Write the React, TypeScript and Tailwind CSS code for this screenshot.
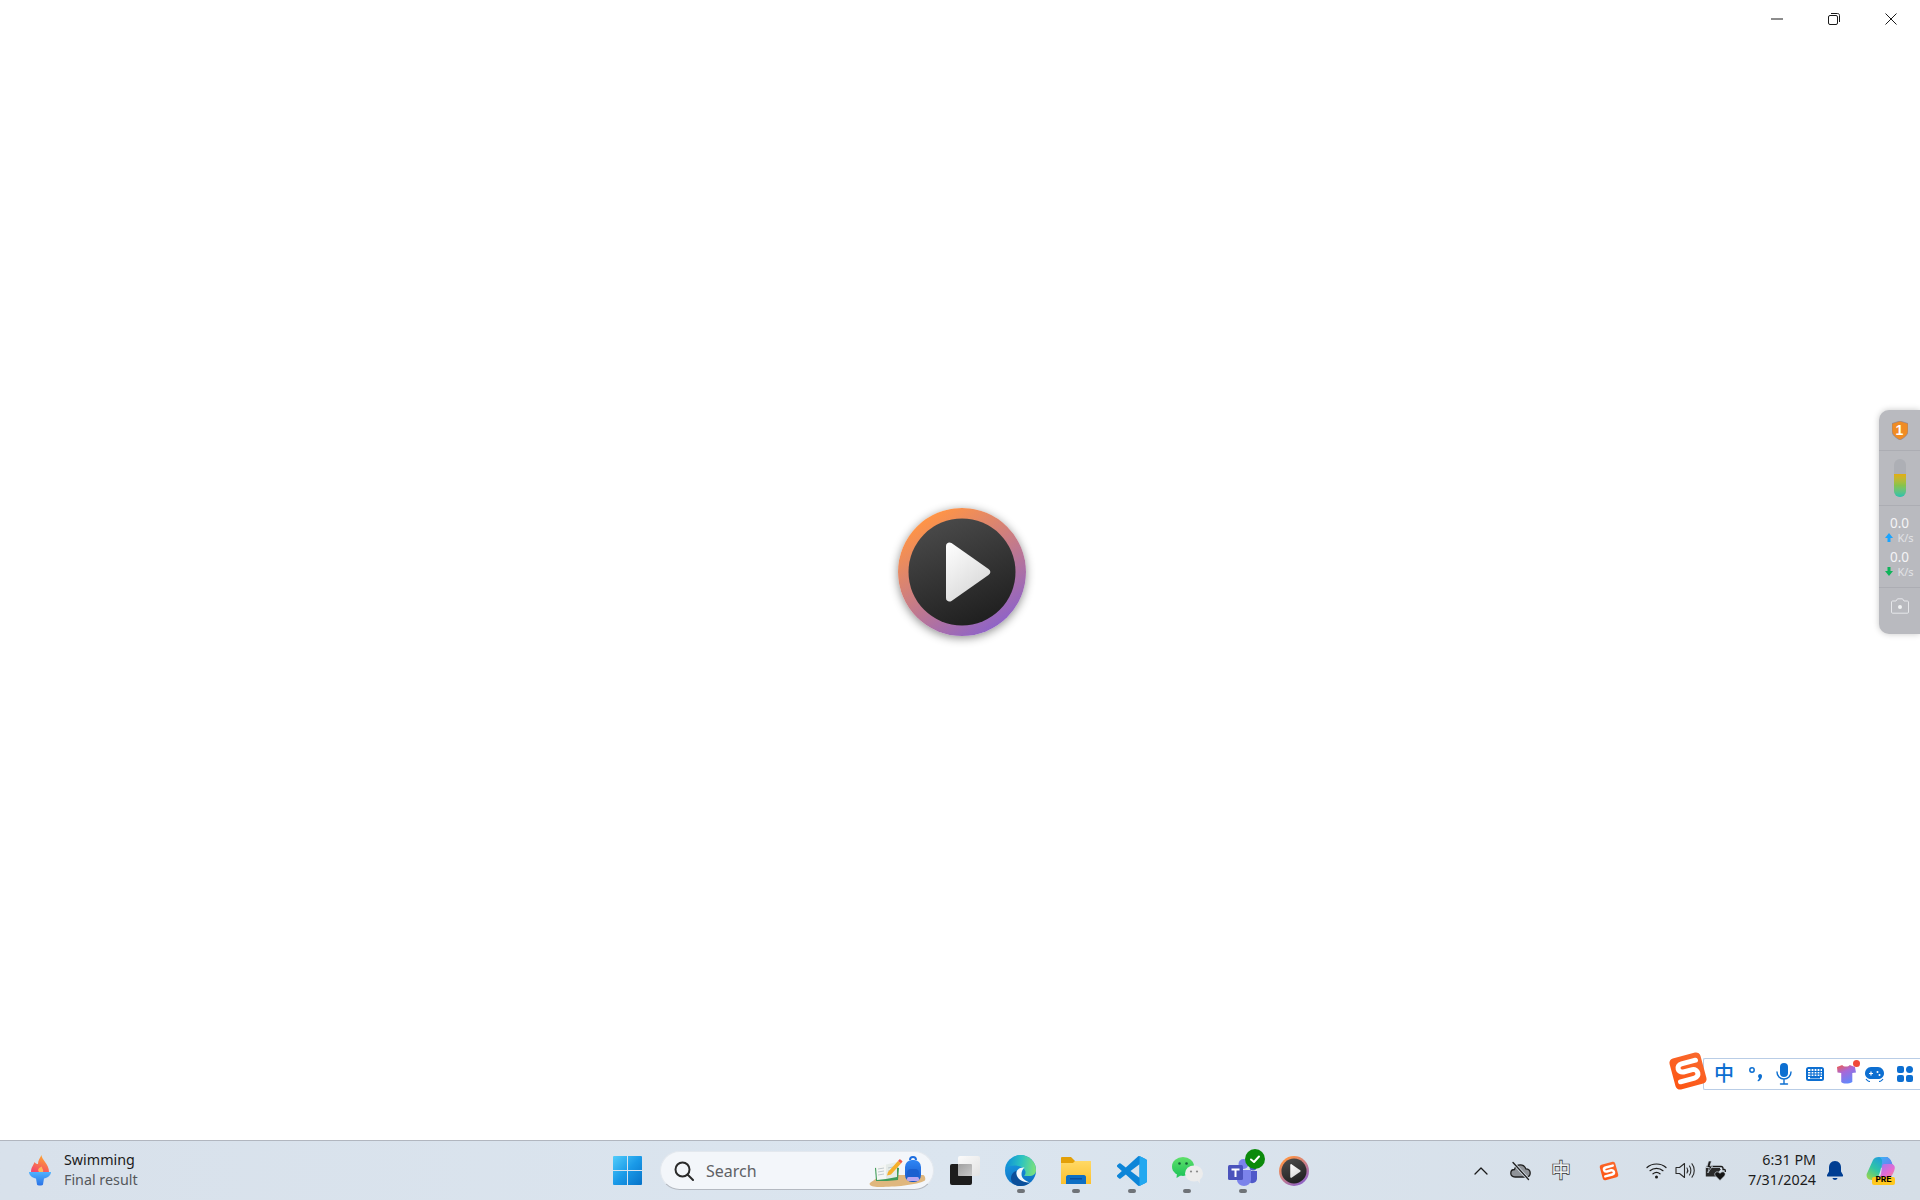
import React from "react";

const FONT = "font-['Noto_Sans','Noto_Sans_CJK_SC',sans-serif]";

function Torch() {
  return (
    <svg width="22" height="31" viewBox="0 0 22 31">
      <defs>
        <linearGradient id="flame" x1="0.7" y1="0" x2="0.3" y2="1">
          <stop offset="0" stopColor="#ffa92e" />
          <stop offset="1" stopColor="#f4476b" />
        </linearGradient>
        <linearGradient id="bowl" x1="0" y1="0" x2="0" y2="1">
          <stop offset="0" stopColor="#4fb2ff" />
          <stop offset="1" stopColor="#2a72e6" />
        </linearGradient>
      </defs>
      <path d="M12.5 0C12.5 5 20 8.500 20 17H2C2 12 4.500 10.500 5.500 7C6.500 8.500 7.500 9 9 9C9 5.500 11 3 12.500 0Z" fill="url(#flame)" />
      <path d="M10 17C8 14.500 10 12.500 13 11.500C12.500 13.500 15 14.500 14 17Z" fill="#ffb65a" />
      <path d="M0 17H22C22 20.500 18 23 15 23.500L14 29.500C13.800 30.800 8.200 30.800 8 29.500L7 23.500C4 23 0 20.500 0 17Z" fill="url(#bowl)" />
    </svg>
  );
}

function StartIcon() {
  return (
    <svg width="29" height="29" viewBox="0 0 29 29">
      <defs>
        <linearGradient id="win" x1="0" y1="0" x2="1" y2="1">
          <stop offset="0" stopColor="#52cdfb" />
          <stop offset="0.5" stopColor="#1a9ae8" />
          <stop offset="1" stopColor="#0672c8" />
        </linearGradient>
      </defs>
      <path d="M1 0H14V14H0V1A1 1 0 0 1 1 0ZM15 0H28A1 1 0 0 1 29 1V14H15ZM0 15H14V29H1A1 1 0 0 1 0 28ZM15 15H29V28A1 1 0 0 1 28 29H15Z" fill="url(#win)" />
    </svg>
  );
}

function SearchArt() {
  return (
    <svg width="58" height="32" viewBox="0 0 58 32">
      <defs>
        <linearGradient id="pack" x1="0" y1="0" x2="0" y2="1">
          <stop offset="0" stopColor="#2f86f5" />
          <stop offset="1" stopColor="#1656c8" />
        </linearGradient>
      </defs>
      <path d="M10 19H54C56 19 57.500 24 55 25C44 30 20 31 10 31C4 31 -1 29 1 27C3 25 8 23 10 19Z" fill="#dfb77e" />
      <path d="M6 12L18 9L30 12L29 24L18 25L7 25Z" fill="#3f9b58" />
      <path d="M7 11L17 8.500V23L8 24Z" fill="#f4f6f4" />
      <path d="M17 8.500L28 6V21L17 23Z" fill="#e5ebe8" />
      <path d="M9 13L15 12M9 16L15 15M9 19L15 18M19 12L24 11M19 15L24 14" stroke="#b5bfc4" strokeWidth="0.8" />
      <path d="M19 16L29 5L32 7.500L22 18.500L18 19.500Z" fill="#f6b02c" />
      <path d="M29 5L30.500 3.200C31 2.800 33.500 4.800 33.500 5.500L32 7.500Z" fill="#ee5a4a" />
      <rect x="36" y="4" width="16" height="22" rx="7" fill="url(#pack)" />
      <path d="M41 4C41 0 47 0 47 4" fill="none" stroke="#1d6ee0" strokeWidth="2" />
      <rect x="38" y="13" width="12" height="12" rx="4" fill="#1b60d0" />
      <rect x="38" y="21" width="12" height="4" rx="1.500" fill="#b9a7f0" />
    </svg>
  );
}

function TaskView() {
  return (
    <svg width="30" height="29" viewBox="0 0 30 29">
      <defs>
        <linearGradient id="tv" x1="0" y1="0" x2="1" y2="1">
          <stop offset="0" stopColor="#fbfbfb" />
          <stop offset="1" stopColor="#e2e2e2" />
        </linearGradient>
        <linearGradient id="tv2" x1="0" y1="0" x2="1" y2="1">
          <stop offset="0" stopColor="#a0a0a0" />
          <stop offset="1" stopColor="#c8c8c8" />
        </linearGradient>
      </defs>
      <rect x="0" y="8" width="22" height="21" rx="2" fill="#1d1d1d" />
      <rect x="8" y="0" width="22" height="20" rx="2" fill="url(#tv)" />
      <rect x="8" y="8" width="14" height="12" rx="1" fill="url(#tv2)" />
    </svg>
  );
}

function Edge() {
  return (
    <svg width="31" height="31" viewBox="0 0 31 31">
      <defs>
        <linearGradient id="edgeB" x1="0.2" y1="0.1" x2="0.4" y2="1">
          <stop offset="0" stopColor="#1b9de2" />
          <stop offset="1" stopColor="#0d6fc4" />
        </linearGradient>
        <linearGradient id="edgeG" x1="0" y1="0.4" x2="1" y2="0.5">
          <stop offset="0" stopColor="#0f8fd8" />
          <stop offset="0.5" stopColor="#2cc3c0" />
          <stop offset="1" stopColor="#7ce27a" />
        </linearGradient>
      </defs>
      <circle cx="15.500" cy="15.500" r="15.500" fill="url(#edgeB)" />
      <path d="M15.500 0A15.500 15.500 0 0 1 31 15.500C31 19 28 21 24 21H19C21 19 21 16 19 14C16 10.500 8 9 .6 13C3 5 9 0 15.500 0Z" fill="url(#edgeG)" />
      <path d="M11.500 19C12 24 18 28 25 27.500C22 30 18.500 31 15.500 31C10 31 6 28 6 23.500C6 19.500 8.500 16.500 11.500 16Z" fill="#0b4f9a" />
      <path d="M19.500 12.500C14.500 12 11 15 11.500 19C12 24 18 28 25 27.500C21 26 16.500 24 16.500 19C16.500 16.500 17.500 14 19.500 12.500Z" fill="#f2f7fb" />
    </svg>
  );
}

function Folder() {
  return (
    <svg width="30" height="27" viewBox="0 0 30 27">
      <defs>
        <linearGradient id="fold" x1="0" y1="0" x2="0" y2="1">
          <stop offset="0" stopColor="#ffd966" />
          <stop offset="1" stopColor="#fcc02c" />
        </linearGradient>
      </defs>
      <path d="M0 1A1 1 0 0 1 1 0H10L14 4H30V12H0Z" fill="#e3a008" />
      <path d="M0 6H12L14 4H30V27H0Z" fill="url(#fold)" />
      <path d="M5 27V20C5 19 6 18 7 18H23C24 18 25 19 25 20V27Z" fill="#0d6fc4" />
      <rect x="9" y="21" width="12" height="1.500" fill="#0a4f9e" />
    </svg>
  );
}

function VSCode() {
  return (
    <svg width="30" height="30" viewBox="0 0 24 24">
      <path d="M23.150 2.587L18.210.21a1.494 1.494 0 0 0-1.705.29l-9.460 8.630-4.120-3.128a.999.999 0 0 0-1.276.057L.327 7.261A1 1 0 0 0 .326 8.740L3.899 12 .326 15.260a1 1 0 0 0 .001 1.479L1.650 17.940a.999.999 0 0 0 1.276.057l4.120-3.128 9.460 8.630a1.492 1.492 0 0 0 1.704.29l4.942-2.377A1.500 1.500 0 0 0 24 20.060V3.939a1.500 1.500 0 0 0-.85-1.352zm-5.146 14.861L10.826 12l7.178-5.448v10.896z" fill="#0d85d8" />
      <path d="M18 .05C18 .05 23.150 2.587 23.150 2.587A1.500 1.500 0 0 1 24 3.939V20.060a1.500 1.500 0 0 1-.85 1.352L18 23.900Z" fill="#22a8f0" />
    </svg>
  );
}

function WeChat() {
  return (
    <svg width="31" height="27" viewBox="0 0 31 27">
      <defs>
        <linearGradient id="wc" x1="0" y1="0" x2="0" y2="1">
          <stop offset="0" stopColor="#5fe06a" />
          <stop offset="1" stopColor="#1fc45a" />
        </linearGradient>
      </defs>
      <ellipse cx="11" cy="9.500" rx="11" ry="9.500" fill="url(#wc)" />
      <path d="M5 16L4.500 21L9.500 18Z" fill="#2cc85c" />
      <circle cx="7.500" cy="6.500" r="1.300" fill="#16633a" />
      <circle cx="14.500" cy="6.500" r="1.300" fill="#16633a" />
      <ellipse cx="22" cy="16.500" rx="9" ry="8" fill="#ececec" />
      <path d="M25 23L28 26.500L27.500 21.500Z" fill="#ececec" />
      <circle cx="19" cy="14.500" r="1.100" fill="#8b8b8b" />
      <circle cx="25" cy="14.500" r="1.100" fill="#8b8b8b" />
    </svg>
  );
}

function Teams() {
  return (
    <span className="relative ml-[1px] flex h-[30px] w-[30px] items-center justify-center">
      <svg width="30" height="27" viewBox="0 0 30 27" className="mt-[4px]">
        <circle cx="15.500" cy="5" r="5" fill="#7b83eb" />
        <circle cx="25" cy="8" r="3.500" fill="#5059c9" />
        <path d="M20 12H29V20A5 5 0 0 1 20 22Z" fill="#5059c9" />
        <path d="M9 11H23V21A7 6 0 0 1 9 21Z" fill="#7b83eb" />
        <rect x="0" y="6" width="15" height="15" rx="1.500" fill="#4b53bc" />
        <path d="M3.500 9.500H11.500V11.500H8.500V18H6.500V11.500H3.500Z" fill="#fff" />
      </svg>
      <span className="absolute left-[17px] top-[-7px] flex h-[20px] w-[20px] items-center justify-center rounded-full bg-[#0b8a0b]">
        <svg width="12" height="12" viewBox="0 0 12 12">
          <path d="M2 6.500L5 9L10 3.500" fill="none" stroke="#fff" strokeWidth="2" strokeLinecap="round" strokeLinejoin="round" />
        </svg>
      </span>
    </span>
  );
}

function PlayLogo({ big }: { big?: boolean }) {
  const id = big ? "ring-b" : "ring-s";
  return (
    <svg width={big ? 128 : 30} height={big ? 128 : 30} viewBox="0 0 128 128" className="block">
      <defs>
        <linearGradient id={id} x1="0.2" y1="0.1" x2="0.75" y2="0.95">
          <stop offset="0" stopColor="#ff9446" />
          <stop offset="1" stopColor="#8e63c8" />
        </linearGradient>
        <linearGradient id={id + "d"} x1="0.3" y1="0" x2="0.7" y2="1">
          <stop offset="0" stopColor="#4a4a4a" />
          <stop offset="1" stopColor="#1e1e1e" />
        </linearGradient>
        <linearGradient id={id + "w"} x1="0" y1="0" x2="0.6" y2="1">
          <stop offset="0" stopColor="#ffffff" />
          <stop offset="1" stopColor="#d8d8d8" />
        </linearGradient>
      </defs>
      <circle cx="64" cy="64" r="64" fill={`url(#${id})`} />
      <circle cx="64" cy="64" r="53.500" fill={`url(#${id}d)`} />
      <path d="M48 38C48 35 51 33.500 53.500 35L90.500 61C93 63 93 65 90.500 67L53.500 93C51 94.500 48 93 48 90Z" fill={`url(#${id}w)`} />
    </svg>
  );
}

function OneDrive() {
  return (
    <svg width="21" height="20" viewBox="0 0 21 20">
      <path d="M5 16C2 16 .8 14 .8 12.200C.8 10 2.500 8.500 4.500 8.500C5.200 5.500 7.500 3.800 10.300 3.800C13 3.800 15 5.500 15.800 7.800C18.500 7.800 20.200 9.800 20.200 12C20.200 14.300 18.500 16 16 16Z" fill="#8f9398" stroke="#1f1f1f" strokeWidth="1.300" />
      <path d="M3 1.500L18.500 18.500" stroke="#d6dfe8" strokeWidth="3" />
      <path d="M3 1.500L18.500 18.500" stroke="#1f1f1f" strokeWidth="1.300" strokeLinecap="round" />
    </svg>
  );
}

function SogouS({ size }: { size: number }) {
  return (
    <svg width={size} height={size} viewBox="0 0 40 40">
      <defs>
        <linearGradient id={"sg" + size} x1="0" y1="1" x2="1" y2="0">
          <stop offset="0" stopColor="#fd5412" />
          <stop offset="1" stopColor="#f96a2f" />
        </linearGradient>
      </defs>
      <g transform="rotate(-15 20 20)">
        <rect x="4" y="4" width="32" height="32" rx="4.500" fill={`url(#sg${size})`} />
        <path d="M30 11.500H15.500C9.500 11.500 9.500 19.500 15.500 19.800H24.500C30.500 20.200 30.500 28.500 24.500 28.500H10" fill="none" stroke="#fff" strokeWidth="5" strokeLinecap="round" />
      </g>
    </svg>
  );
}

function Wifi() {
  return (
    <svg width="21" height="17" viewBox="0 0 21 17" fill="none" stroke="#1b1b1b" strokeWidth="1.200" strokeLinecap="round">
      <path d="M1 5.500C6 .8 15 .8 20 5.500" />
      <path d="M4 8.700C7.500 5.500 13.500 5.500 17 8.700" />
      <path d="M7 11.800C9 10.200 12 10.200 14 11.800" />
      <circle cx="10.500" cy="15" r="1.500" fill="#1b1b1b" stroke="none" />
    </svg>
  );
}

function Volume() {
  return (
    <svg width="21" height="17" viewBox="0 0 21 17" fill="none" stroke="#2b2b2b" strokeWidth="1.100" strokeLinecap="round" strokeLinejoin="round">
      <path d="M1 5.500H4.500L9.500 1.500V15.500L4.500 11.500H1Z" />
      <path d="M12 6C13 7.500 13 9.500 12 11" />
      <path d="M14.500 4C16.300 6.500 16.300 10.500 14.500 13" />
      <path d="M17 1.800C20 5.500 20 11.500 17 15.200" />
    </svg>
  );
}

function Battery() {
  return (
    <svg width="21" height="20" viewBox="0 0 21 20">
      <path d="M1.500 5.500H16C17 5.500 18 6.500 18 7.500V8.500H19.500C20 8.500 20.300 9 20.300 9.500V11" fill="none" stroke="#1a1a1a" strokeWidth="1.300" />
      <path d="M.8 5.500V15.500H12V13L16 8H15L15 7H1Z" fill="#2a2a2a" />
      <path d="M3.500 0L1.800 6.500H4.300L2.800 12L7.500 5H5L6.500 0Z" fill="#1a1a1a" stroke="#d6dfe8" strokeWidth="0.700" />
      <path d="M15 19.500L10.500 15C9 13.300 10 10.800 12.200 10.800C13.300 10.800 14.400 11.400 15 12.300C15.600 11.400 16.700 10.800 17.800 10.800C20 10.800 21 13.300 19.500 15Z" fill="#151515" stroke="#d6dfe8" strokeWidth="0.700" />
    </svg>
  );
}

function Bell() {
  return (
    <svg width="16" height="20" viewBox="0 0 16 20">
      <path d="M8 0C4 0 2 3 2 6.500V10.500L0 14C-.3 15 .3 15.500 1 15.500H15C15.700 15.500 16.300 15 16 14L14 10.500V6.500C14 3 12 0 8 0Z" fill="#003e92" />
      <path d="M5.500 17H10.500C10 19.500 6 19.500 5.500 17Z" fill="#003e92" />
    </svg>
  );
}

function Copilot() {
  return (
    <span className="relative block h-[28px] w-[29px]">
      <svg width="29" height="24" viewBox="0 0 29 24" className="block">
        <defs>
          <linearGradient id="cp1" x1="0" y1="1" x2="0.8" y2="0">
            <stop offset="0" stopColor="#a9d83f" />
            <stop offset="0.45" stopColor="#2fc5a5" />
            <stop offset="1" stopColor="#1b8ff0" />
          </linearGradient>
          <linearGradient id="cp2" x1="0" y1="0" x2="1" y2="1">
            <stop offset="0" stopColor="#8f7df5" />
            <stop offset="0.6" stopColor="#e66ad2" />
            <stop offset="1" stopColor="#f59a72" />
          </linearGradient>
          <linearGradient id="cp3" x1="0" y1="0" x2="1" y2="1">
            <stop offset="0" stopColor="#38b6f5" />
            <stop offset="1" stopColor="#7a70f0" />
          </linearGradient>
        </defs>
        <path d="M7 3C8 1 10 0 13 0H20C22 0 24 2 25 4L27 9H18L15 11C14 15 13 19 11 21C10 22 8 23 6 23C2 23 0 20 .7 17Z" fill="url(#cp1)" />
        <path d="M13 0H20C22 0 24 2 25 4L27 9H18C16 9 15 10 15 11L16 6C16.500 3 15.500 1 13 0Z" fill="url(#cp3)" />
        <path d="M18 7H25C27.500 7 29 9 28.800 11C28 16 25 22 19 23H9C12 23 14 20 15 17L16 10C16.200 8 17 7 18 7Z" fill="url(#cp2)" />
      </svg>
      <span className="absolute bottom-0 left-[6px] flex h-[8px] w-[23px] items-center justify-center rounded-[2px] bg-[#ffc81e] font-['Liberation_Mono',monospace] text-[9px] font-bold leading-none text-black">
        PRE
      </span>
    </span>
  );
}

function Cell({ children, dot, w = "w-[55.5px]" }: { children: React.ReactNode; dot?: boolean; w?: string }) {
  return (
    <div className={`relative flex h-full items-center justify-center ${w}`}>
      {children}
      {dot && <span className="absolute bottom-[7px] left-1/2 h-[4px] w-[8px] -translate-x-1/2 rounded-full bg-[#6f7378]" />}
    </div>
  );
}

function SideWidget() {
  return (
    <div className="absolute right-0 top-[410px] flex h-[224px] w-[41px] flex-col items-center rounded-l-[10px] bg-[#b9babf] shadow-[0_0_6px_rgba(0,0,0,0.22)]">
      <div className="flex h-[41px] w-full items-center justify-center border-b border-[#acadb3]">
        <span className="relative flex h-[19px] w-[16px] items-center justify-center">
          <svg width="16" height="19" viewBox="0 0 16 19" className="absolute inset-0">
            <path d="M0 2.500L8 0L16 2.500V10C16 14 12 17 8 19C4 17 0 14 0 10Z" fill="#f08c24" stroke="#7f7f9a" strokeWidth="0.600" />
          </svg>
          <span className="relative font-['Liberation_Sans',sans-serif] text-[14px] font-bold leading-none text-white">1</span>
        </span>
      </div>
      <div className="flex h-[55px] w-full items-center justify-center border-b border-[#acadb3]">
        <div className="flex h-[38px] w-[12px] flex-col overflow-hidden rounded-full bg-[#adafb5]">
          <div className="h-[15px]" />
          <div className="flex-1 bg-gradient-to-b from-[#e2ad0c] via-[#86c34a] to-[#1fc2ac]" />
        </div>
      </div>
      <div className="flex h-[82px] w-full flex-col items-center border-b border-[#acadb3] pt-[10px] text-[#f4f4f6]">
        <span className="text-[13.500px] leading-[15px]">0.0</span>
        <span className="flex h-[12px] items-center text-[11px] leading-none text-[#e2e3e6]">
          <svg width="8" height="9" viewBox="0 0 8 9" className="mr-[4px]"><path d="M4 0L8 5H5.500V9H2.500V5H0Z" fill="#19a4ff" /></svg>
          K/s
        </span>
        <span className="mt-[7px] text-[13.500px] leading-[15px]">0.0</span>
        <span className="flex h-[12px] items-center text-[11px] leading-none text-[#e2e3e6]">
          <svg width="8" height="9" viewBox="0 0 8 9" className="mr-[4px]"><path d="M4 9L8 4H5.500V0H2.500V4H0Z" fill="#0fb45a" /></svg>
          K/s
        </span>
      </div>
      <div className="flex w-full flex-1 items-center justify-center pb-[10px]">
        <svg width="18" height="16" viewBox="0 0 18 16" fill="none" stroke="#e6e7ea" strokeWidth="1">
          <path d="M1.500 3H5L6.500 .8H11.500L13 3H16.500C17 3 17.500 3.500 17.500 4V14C17.500 14.800 17 15.200 16.500 15.200H1.500C1 15.200 .5 14.800 .5 14V4C.5 3.500 1 3 1.500 3Z" />
          <circle cx="9" cy="9" r="2" fill="#f1f2f4" stroke="none" />
        </svg>
      </div>
    </div>
  );
}

function ImeBar() {
  return (
    <div className="absolute bottom-[50px] right-0 flex h-[32px] w-[217px] items-center rounded-l-[2px] border border-r-0 border-[#b9cde6] bg-white pl-[10px]">
      <span className="absolute left-[-36px] top-[-8px]"><SogouS size={40} /></span>
      <span className="w-[20px] text-center text-[20px] font-medium leading-none text-[#0d6fd1]">中</span>
      <svg width="14" height="16" viewBox="0 0 14 16" className="ml-[15px]">
        <circle cx="3" cy="4" r="2.200" fill="none" stroke="#0d6fd1" strokeWidth="1.500" />
        <path d="M11 8C13.500 8 13.500 11 12 13C11 14.500 10 15 9 15.500L8.500 14.500C9.500 13.500 10 13 10 12C8.500 11 9 8 11 8Z" fill="#0d6fd1" />
      </svg>
      <svg width="16" height="22" viewBox="0 0 16 22" className="ml-[13px]">
        <rect x="4" y="0" width="8" height="14" rx="4" fill="#0d6fd1" />
        <path d="M1 9C1 13 4 16 8 16C12 16 15 13 15 9M8 16V21M4.500 21H11.500" fill="none" stroke="#0d6fd1" strokeWidth="1.400" strokeLinecap="round" />
      </svg>
      <svg width="18" height="14" viewBox="0 0 18 14" className="ml-[14px]">
        <rect x="0" y="0" width="18" height="14" rx="2.500" fill="#0d6fd1" />
        <rect x="2" y="2" width="14" height="10" fill="#fff" />
        <path d="M2 4.500H16M2 7H16M2 9.500H16M5 2V9.500M8 2V9.500M11 2V9.500M14 2V9.500" stroke="#0d6fd1" strokeWidth="1.200" />
        <path d="M4 10.500H14" stroke="#0d6fd1" strokeWidth="2" />
      </svg>
      <span className="relative ml-[12px] block h-[22px] w-[22px]">
        <svg width="21" height="19" viewBox="0 0 18 18" className="absolute left-0 top-[2px]">
          <defs>
            <linearGradient id="shirt" x1="0.1" y1="0" x2="0.6" y2="1">
              <stop offset="0" stopColor="#ee5a50" />
              <stop offset="0.4" stopColor="#a868d8" />
              <stop offset="1" stopColor="#5f88fc" />
            </linearGradient>
          </defs>
          <path d="M0 2L5 0C6 2 11 2 12 0L17 2L18 7L14.500 7.500L14.500 16C11 18 6 18 4 16V7.500L.5 7Z" fill="url(#shirt)" />
        </svg>
        <span className="absolute right-[-2px] top-[-3px] h-[7px] w-[7px] rounded-full bg-[#f0493a]" />
      </span>
      <svg width="19" height="15" viewBox="0 0 19 15" className="ml-[7px]">
        <path d="M6 0H13C16.500 0 19 3 19 6.500C19 10 16 12 13 12H6C3 12 0 10 0 6.500C0 3 2.500 0 6 0Z" fill="#0d6fd1" />
        <path d="M4 6.500H8M6 4.500V8.500" stroke="#fff" strokeWidth="1.200" />
        <circle cx="12.500" cy="5" r="1" fill="#fff" /><circle cx="14.500" cy="8" r="1" fill="#fff" />
        <path d="M1 12C2 13.500 3 14.500 5 14.500M18 12C17 13.500 16 14.500 14 14.500" fill="none" stroke="#0d6fd1" strokeWidth="1.200" />
      </svg>
      <svg width="16" height="16" viewBox="0 0 16 16" className="ml-[13px]">
        <rect x="0" y="0" width="7" height="7" rx="2" fill="#0d6fd1" />
        <rect x="9" y="0" width="7" height="7" rx="3.500" fill="#0d6fd1" />
        <rect x="0" y="9" width="7" height="7" rx="2" fill="#0d6fd1" />
        <rect x="9" y="9" width="7" height="7" rx="2" fill="#0d6fd1" />
      </svg>
    </div>
  );
}

export default function App() {
  return (
    <div className={`flex h-[1200px] w-[1920px] flex-col overflow-hidden bg-white ${FONT}`}>
      <div className="relative flex min-h-0 flex-1 flex-col">
        <div className="flex h-[38px] justify-end pr-[1px]">
          {[
            <path key="m" d="M0 6H12" />,
            <g key="r"><rect x=".5" y="2.500" width="9" height="9" rx="1.500" /><path d="M3 .5H9.500C11 .5 11.500 1.500 11.500 2.500V9" /></g>,
            <path key="c" d="M.5 .5L11.500 11.500M11.500 .5L.5 11.500" />,
          ].map((g, i) => (
            <div key={i} className="flex h-[38px] w-[57px] items-center justify-center">
              <svg width="12" height="12" viewBox="0 0 12 12" fill="none" stroke="#1a1a1a" strokeWidth="1">{g}</svg>
            </div>
          ))}
        </div>
        <div className="flex flex-1 items-center justify-center pb-[34px] pl-[4px]">
          <div className="rounded-full shadow-[0_2px_10px_rgba(0,0,0,0.45)]">
            <PlayLogo big />
          </div>
        </div>
        <SideWidget />
        <ImeBar />
      </div>

      <div className="flex h-[60px] items-center border-t border-[#b1b6bf] bg-gradient-to-r from-[#d8e1eb] via-[#dbe5ef] to-[#d5dee7]">
        <div className="flex h-full w-[613px] items-center pl-[29px]">
          <Torch />
          <div className="ml-[13px] flex flex-col pb-[2px] text-[14.300px] leading-[20px]">
            <span className="text-[#1a1a1a]">Swimming</span>
            <span className="text-[#55585c]">Final result</span>
          </div>
        </div>
        <StartIcon />
        <div className="relative ml-[18px] flex h-[39px] w-[274px] items-center rounded-full border border-[#e3e8ee] border-b-[#b4b9c1] bg-[#f3f6fa] pl-[13px]">
          <svg width="20" height="20" viewBox="0 0 20 20" fill="none" stroke="#2a2a2a" strokeWidth="2">
            <circle cx="8.500" cy="8.500" r="7" />
            <path d="M13.500 13.500L19 19" strokeLinecap="round" />
          </svg>
          <span className="ml-[12px] text-[16px] text-[#5f6165]">Search</span>
          <span className="absolute right-[6px] top-[4px]"><SearchArt /></span>
        </div>
        <div className="ml-[3.500px] flex h-full items-center">
          <Cell><TaskView /></Cell>
          <Cell dot><Edge /></Cell>
          <Cell dot><Folder /></Cell>
          <Cell dot><VSCode /></Cell>
          <Cell dot><WeChat /></Cell>
          <Cell dot><Teams /></Cell>
          <Cell w="w-[47px]"><PlayLogo /></Cell>
        </div>
        <div className="ml-auto flex h-full items-center pr-[25px]">
          <svg width="14" height="8" viewBox="0 0 14 8" fill="none" stroke="#1a1a1a" strokeWidth="1.300" strokeLinecap="round" strokeLinejoin="round" className="mr-[22.500px]">
            <path d="M1 7L7 1L13 7" />
          </svg>
          <span className="mr-[20px]"><OneDrive /></span>
          <span className="mr-[30px] w-[18px] text-center text-[20px] font-bold leading-none text-[#eef2f6] [-webkit-text-stroke:0.7px_#333]">中</span>
          <span className="mr-[27px]"><SogouS size={20} /></span>
          <span className="mr-[8px]"><Wifi /></span>
          <span className="mr-[9px]"><Volume /></span>
          <Battery />
          <div className="ml-[20px] flex w-[70px] flex-col items-end pb-[2px] text-[14.300px] leading-[20px] text-[#1c1c1c]">
            <span>6:31 PM</span>
            <span>7/31/2024</span>
          </div>
          <span className="ml-[11px]"><Bell /></span>
          <span className="ml-[23px]"><Copilot /></span>
        </div>
      </div>
    </div>
  );
}
